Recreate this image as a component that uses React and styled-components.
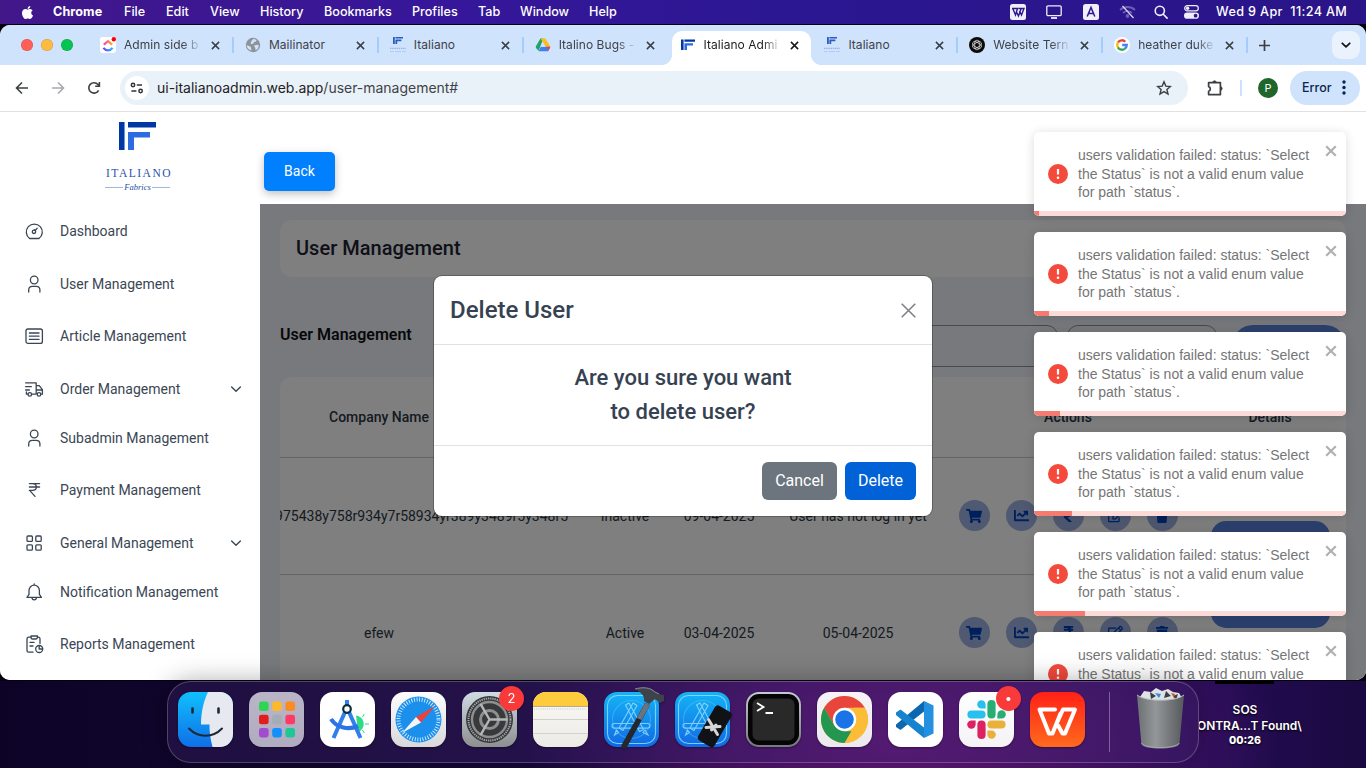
import React from "react";
import styled, { createGlobalStyle, css } from "styled-components";
import {
  FaShoppingCart,
  FaChartLine,
  FaRupeeSign,
  FaRegEdit,
  FaTrash,
  FaApple,
} from "react-icons/fa";

const Global = createGlobalStyle`
  * { box-sizing: border-box; }
  body { margin: 0; background: #0d0423; }
  svg { display: block; flex: none; }
  button { font: inherit; border: 0; padding: 0; margin: 0; background: none; }
`;

const ui = `Inter, "Liberation Sans", sans-serif`;
const roboto = `Roboto, "Liberation Sans", sans-serif`;

const Desktop = styled.div`
  position: relative;
  width: 1366px;
  height: 768px;
  overflow: hidden;
  display: flex;
  flex-direction: column;
  background: linear-gradient(90deg, #41178a 0, #36179a 450px, #2b1791 800px, #2a1488 1366px);
`;

/* ---------- menu bar ---------- */
const MenuBar = styled.header`
  height: 24px;
  flex: none;
  display: flex;
  align-items: center;
  padding: 0 18px 0 20px;
  color: #fff;
  font: 500 12.6px/24px ${ui};
`;
const MenuItem = styled.span`
  width: ${(p) => p.$w}px;
  flex: none;
  white-space: nowrap;
  font-weight: ${(p) => (p.$bold ? 700 : 500)};
  letter-spacing: ${(p) => p.$ls || 0}px;
`;
const MenuRight = styled.div`
  margin-left: auto;
  display: flex;
  align-items: center;
`;
const Tray = styled.span`
  width: ${(p) => p.$w}px;
  display: flex;
`;
const Clock = styled.span`
  width: 132px;
  white-space: pre;
  letter-spacing: 0.38px;
`;

/* ---------- browser window ---------- */
const Backing = styled.div`
  flex: none;
  height: 657px;
  padding-top: 1px;
  background: #07010f;
`;
const Window = styled.section`
  height: 655px;
  border-radius: 10px;
  overflow: hidden;
  background: #fff;
  display: flex;
  flex-direction: column;
`;
const TabStrip = styled.div`
  height: 40px;
  flex: none;
  display: flex;
  background: #d0e3fc;
`;
const Lights = styled.div`
  width: 89px;
  padding-left: 21px;
  display: flex;
  align-items: center;
  gap: 8px;
`;
const Light = styled.i`
  width: 12px;
  height: 12px;
  border-radius: 50%;
  background: ${(p) => p.$c};
  box-shadow: inset 0 0 0 0.5px rgba(0, 0, 0, 0.18);
`;
const Tabs = styled.div`
  width: 1159px;
  display: flex;
`;
const Tab = styled.div`
  flex: 1 1 0;
  min-width: 0;
  display: flex;
  align-items: center;
  border-right: 0;
`;
const TabBody = styled.div`
  position: relative;
  flex: 1;
  min-width: 0;
  height: 34px;
  margin: 6px 2px 0 3px;
  padding: 0 12px 6px 8px;
  display: flex;
  align-items: center;
  border-radius: 10px 10px 0 0;
  color: #3e4247;
  ${(p) =>
    p.$active &&
    css`
      background: #fff;
      color: #1c1d1f;
      &::before,
      &::after {
        content: "";
        position: absolute;
        bottom: 0;
        width: 10px;
        height: 10px;
      }
      &::before {
        left: -10px;
        background: radial-gradient(circle at 0 0, transparent 9.6px, #fff 10.2px);
      }
      &::after {
        right: -10px;
        background: radial-gradient(circle at 100% 0, transparent 9.6px, #fff 10.2px);
      }
    `}
`;
const TabTitle = styled.span`
  flex: 1;
  min-width: 0;
  margin: 0 7px 0 8px;
  overflow: hidden;
  white-space: nowrap;
  font: 400 12px/18px ${ui};
  letter-spacing: 0.05px;
  ${(p) =>
    p.$fade &&
    css`
      mask-image: linear-gradient(90deg, #000 58px, transparent 78px);
    `}
`;
const TabRule = styled.i`
  width: 2px;
  height: 16px;
  margin-left: -2px;
  background: ${(p) => (p.$hidden ? "transparent" : "#a5ccfb")};
`;
const NewTab = styled.div`
  width: 33px;
  display: flex;
  align-items: center;
  justify-content: center;
`;
const TabMenu = styled.button`
  width: 28px;
  height: 28px;
  margin: 6px 6px 0 auto;
  border-radius: 9px;
  background: #eaf2fe;
  display: flex;
  align-items: center;
  justify-content: center;
`;

const Toolbar = styled.div`
  height: 47px;
  flex: none;
  display: flex;
  align-items: center;
  padding: 0 6px 1px 13px;
  border-bottom: 1px solid #dfe1e4;
  background: #fff;
`;
const NavIcon = styled.span`
  width: 36px;
  display: flex;
`;
const Omnibox = styled.div`
  width: 1068px;
  height: 34px;
  margin-left: -1px;
  border-radius: 17px;
  background: #e9f1f9;
  display: flex;
  align-items: center;
  padding: 0 16px 0 5px;
  font: 400 14px/34px ${ui};
  color: #1f2124;
`;
const SiteInfo = styled.span`
  width: 24px;
  height: 24px;
  border-radius: 50%;
  background: #fff;
  display: flex;
  align-items: center;
  justify-content: center;
  margin-right: 8px;
`;
const Url = styled.span`
  flex: 1;
  letter-spacing: -0.02px;
  em {
    font-style: normal;
    color: #3f4348;
  }
`;
const Extensions = styled.span`
  width: 52px;
  padding-left: 17.5px;
`;
const ToolRule = styled.i`
  width: 2px;
  height: 16px;
  background: #cfe2fc;
  margin-right: 16px;
`;
const Profile = styled.span`
  width: 20px;
  height: 20px;
  border-radius: 50%;
  background: #20662a;
  color: #fff;
  font: 400 11px/20px ${ui};
  text-align: center;
`;
const ErrorPill = styled.span`
  margin-left: auto;
  width: 70px;
  height: 34px;
  border-radius: 17px;
  padding: 0 14px 0 12px;
  background: #d0e3fc;
  color: #0a2550;
  display: flex;
  align-items: center;
  justify-content: space-between;
  font: 500 12.5px/34px ${ui};
`;

/* ---------- site ---------- */
const Site = styled.div`
  flex: 1;
  min-height: 0;
  display: flex;
  font-family: ${roboto};
`;
const Sidebar = styled.aside`
  width: 260px;
  flex: none;
  background: #fff;
`;
const Brand = styled.div`
  height: 93px;
  padding: 10px 0 0 105px;
  color: #1f50a8;
`;
const BrandMark = styled.div`
  padding-left: 14px;
`;
const BrandName = styled.div`
  margin: 17px 0 0 1px;
  width: 70px;
  font: 400 11.5px/12px "Liberation Serif", serif;
  letter-spacing: 1.5px;
`;
const BrandSub = styled.div`
  width: 65px;
  margin-top: 2px;
  display: flex;
  align-items: center;
  gap: 1px;
  font: italic 400 8.5px/12px "Liberation Serif", serif;
  &::before,
  &::after {
    content: "";
    flex: 1;
    height: 1px;
    background: #9db8e2;
  }
`;
const NavItem = styled.a`
  height: ${(p) => (p.$group ? 54 : 52.4)}px;
  margin-bottom: ${(p) => (p.$group ? -4.6 : 0)}px;
  padding: 0 18px 0 24px;
  display: flex;
  align-items: center;
  color: #3a4654;
  font: 400 14px/20px ${roboto};
  letter-spacing: 0;
  span {
    flex: 1;
    margin-left: 16px;
    white-space: nowrap;
  }
`;
const Main = styled.main`
  flex: 1;
  min-width: 0;
  display: flex;
  flex-direction: column;
`;
const TopBar = styled.div`
  height: 92px;
  flex: none;
  padding: 40px 0 0 4px;
`;
const BackButton = styled.button`
  width: 71px;
  height: 39px;
  border-radius: 5px;
  background: #0080ff;
  color: #fff;
  font: 400 14px/39px ${roboto};
  letter-spacing: 0.1px;
  box-shadow: 0 3px 8px rgba(0, 0, 0, 0.25);
`;
const Content = styled.div`
  position: relative;
  flex: 1;
  min-height: 0;
  overflow: hidden;
  background: #f0f3f8;
  padding: 16px 20px 0;
`;
const Dim = styled.div`
  position: absolute;
  inset: 0;
  background: rgba(0, 0, 0, 0.5);
`;
const PageTitle = styled.h1`
  margin: 0;
  height: 57px;
  padding-left: 16px;
  border-radius: 12px;
  background: #fff;
  color: #1c2230;
  font: 500 20px/56px ${roboto};
  letter-spacing: 0.02px;
`;
const Filters = styled.div`
  height: 100px;
  padding-top: 48px;
  display: flex;
  align-items: flex-start;
`;
const FiltersTitle = styled.h2`
  margin: 0;
  flex: 1;
  color: #0e1116;
  font: 600 16px/20px ${roboto};
`;
const Field = styled.div`
  width: ${(p) => p.$w}px;
  height: 42px;
  margin-right: ${(p) => p.$gap}px;
  border: 1px solid #8f949b;
  border-radius: 11px;
  display: flex;
  align-items: center;
  justify-content: flex-end;
  padding: 0 13px 6px 0;
`;
const PillButton = styled.button`
  width: ${(p) => p.$w}px;
  height: ${(p) => p.$h}px;
  border-radius: 21px;
  background: #5b83dc;
`;
const Table = styled.div`
  border-radius: 12px;
  background: #fff;
  overflow: hidden;
  height: 330px;
`;
const Row = styled.div`
  display: grid;
  grid-template-columns: 198px 108px 78px 110px 168px 252px 152px;
  height: ${(p) => (p.$head ? 81 : 117)}px;
  padding-bottom: ${(p) => (p.$head ? 0 : 1)}px;
  border-bottom: 1px solid #c9cbce;
  color: #2c3644;
  font: ${(p) => (p.$head ? 500 : 400)} 14px/20px ${roboto};
  letter-spacing: 0;
`;
const Cell = styled.div`
  display: flex;
  align-items: center;
  justify-content: ${(p) => (p.$end ? "flex-end" : "center")};
  grid-column: ${(p) => (p.$end ? "span 2" : "auto")};
  padding-right: ${(p) => (p.$end ? 18 : 0)}px;
  gap: 16px;
  white-space: nowrap;
  overflow: ${(p) => (p.$end ? "hidden" : "visible")};
`;
const Stack = styled.div`
  display: flex;
  flex-direction: column;
  gap: 10px;
`;
const Action = styled.span`
  width: 31px;
  height: 31px;
  border-radius: 50%;
  background: #9fb3e2;
  color: #0040b8;
  display: flex;
  align-items: center;
  justify-content: center;
`;

/* ---------- modal ---------- */
const Modal = styled.div`
  position: absolute;
  left: 434px;
  top: 276px;
  width: 498px;
  height: 240px;
  border-radius: 8px;
  background: #fff;
  box-shadow: 0 0 0 1px rgba(0, 0, 0, 0.25);
  color: #364252;
  font-family: ${roboto};
`;
const ModalHead = styled.div`
  height: 69px;
  padding: 0 15px 0 16px;
  border-bottom: 1px solid #dee2e6;
  display: flex;
  align-items: center;
  justify-content: space-between;
  font: 500 24px/36px ${roboto};
`;
const ModalText = styled.div`
  height: 101px;
  padding-top: 16px;
  border-bottom: 1px solid #dee2e6;
  text-align: center;
  font: 500 22px/34px ${roboto};
`;
const ModalFoot = styled.div`
  padding: 16px 16px 0;
  display: flex;
  justify-content: flex-end;
  gap: 8px;
`;
const ModalButton = styled.button`
  width: ${(p) => p.$w}px;
  height: 38px;
  border-radius: 6px;
  background: ${(p) => p.$bg};
  color: #fff;
  font: 400 16px/38px ${roboto};
`;

/* ---------- toasts ---------- */
const Toasts = styled.div`
  position: absolute;
  left: 1014px;
  top: 112px;
  width: 352px;
  height: 568px;
  padding: 20px 20px 0;
  overflow: hidden;
  border-radius: 0 0 10px 0;
  display: flex;
  flex-direction: column;
  gap: 16px;
`;
const Toast = styled.div`
  height: 84px;
  flex: none;
  border-radius: 5px;
  overflow: hidden;
  background: #fff;
  box-shadow: 0 1px 10px rgba(0, 0, 0, 0.1), 0 2px 15px rgba(0, 0, 0, 0.05);
  display: flex;
  flex-direction: column;
`;
const ToastBody = styled.div`
  height: 79px;
  padding: 5px 9px 0 14px;
  display: flex;
  align-items: center;
  color: #757575;
`;
const ToastText = styled.p`
  margin: 0 0 0 10px;
  width: 240px;
  white-space: pre-line;
  font: 400 14px/18.5px "Liberation Sans", Arial, sans-serif;
`;
const ToastClose = styled.span`
  align-self: flex-start;
  margin: 7.5px 0 0 6.5px;
`;
const Progress = styled.div`
  height: 5px;
  background: #fcdad7;
`;
const ProgressFill = styled.div`
  height: 5px;
  background: #f77a70;
`;

/* ---------- dock ---------- */
const Shelf = styled.footer`
  position: relative;
  flex: 1;
  display: flex;
  padding-left: 167px;
  background:
    radial-gradient(ellipse 380px 170px at 900px 60px, rgba(110, 24, 132, 0.95) 0, rgba(96, 22, 122, 0.75) 45%, transparent 100%),
    linear-gradient(90deg, #0d0327 0, #12062f 300px, #190a45 700px, #2a0f62 1100px, #1a0940 1366px);
`;
const Dock = styled.div`
  width: 1032px;
  height: 82px;
  border-radius: 24px;
  border: 1px solid rgba(255, 255, 255, 0.22);
  background: rgba(56, 32, 96, 0.42);
  box-shadow: 0 0 26px rgba(0, 0, 0, 0.32);
  display: flex;
  align-items: flex-start;
  padding: 10px 0 0 10px;
`;
const DockApp = styled.div`
  position: relative;
  width: 55px;
  height: 55px;
  margin-right: 16px;
  flex: none;
  filter: drop-shadow(0 1px 1px rgba(0, 0, 0, 0.35));
`;
const Badge = styled.span`
  position: absolute;
  right: -7px;
  top: -6px;
  width: 25px;
  height: 25px;
  border-radius: 50%;
  background: #f83a3a;
  color: #fff;
  font: 400 13px/25px ${ui};
  text-align: center;
`;
const DockRule = styled.i`
  width: 1px;
  height: 60px;
  margin: 0 23px 0 8px;
  background: rgba(255, 255, 255, 0.32);
`;
const FileLabel = styled.div`
  width: 110px;
  overflow: hidden;
  color: #fff;
  font: 600 12px/16px ${ui};
  text-align: center;
  padding-right: 18px;
  text-shadow: 0 1px 2px #000;
  small {
    display: block;
    font-size: 10.5px;
    line-height: 14px;
    font-weight: 800;
  }
  p {
    margin: 0 -20px 0 -2px;
    text-align: left;
    white-space: nowrap;
    letter-spacing: -0.05px;
  }
`;
const FileThumb = styled.i`
  display: block;
  width: 59px;
  height: 3px;
  margin: 0 0 18px 16px;
  background: #000;
`;

/* ---------- drawings ---------- */
const Cross = ({ s = 9, w = 1.7, c = "#3b3f44" }) => (
  <svg width={s} height={s} viewBox="0 0 10 10" stroke={c} strokeWidth={w} fill="none">
    <path d="M1 1l8 8M9 1l-8 8" />
  </svg>
);
const Chevron = ({ s = 12, w = 1.4, c = "#3a4654" }) => (
  <svg width={s} height={s} viewBox="0 0 12 12" stroke={c} strokeWidth={w} fill="none" strokeLinecap="round" strokeLinejoin="round">
    <path d="M1.6 4l4.4 4.2L10.4 4" />
  </svg>
);

const Mark = ({ width, height }) => (
  <svg width={width} height={height} viewBox="0 0 37 28">
    <path fill="#0037a3" d="M0 0h5v28H0zM9 0h28v5.5H9z" />
    <path fill="#2c6ce0" d="M9 10h22v5.5H15V28H9z" />
    <path fill="#6b97ea" d="M5 0h1v28H5z" />
  </svg>
);
const BrandFav = () => (
  <svg width="16" height="16" viewBox="0 0 16 16">
    <path fill="#2a5bc0" d="M3 0h1.8v7H3zM5.4 0H13v1.5H5.4zM5.4 2.6h6v1.6H7.2V7H5.4z" />
    <path stroke="#8fb0e8" d="M0 11.4h16" strokeDasharray="1.4 .8" strokeWidth="1.4" />
    <path stroke="#a9c4f0" d="M0 14.6h4M12 14.6h4M5 14.6h6" strokeWidth=".8" />
  </svg>
);

const favicons = {
  clickup: (
    <svg width="16" height="16" viewBox="0 0 16 16">
      <defs>
        <linearGradient id="cu1"><stop offset="0" stopColor="#ff3fb4" /><stop offset="1" stopColor="#ffab1a" /></linearGradient>
        <linearGradient id="cu2"><stop offset="0" stopColor="#7a3cff" /><stop offset="1" stopColor="#22b8ff" /></linearGradient>
      </defs>
      <rect width="16" height="16" rx="3" fill="#fff" />
      <path d="M3.8 7.6L8 4.2l4.2 3.4" stroke="url(#cu1)" strokeWidth="2.2" fill="none" />
      <path d="M3.4 10.8c2.6 3.4 6.6 3.4 9.2 0" stroke="url(#cu2)" strokeWidth="2.2" fill="none" />
      <circle cx="13.8" cy="2.2" r="2.2" fill="#f00" />
    </svg>
  ),
  globe: (
    <svg width="16" height="16" viewBox="0 0 16 16">
      <circle cx="8" cy="8" r="7.2" fill="#8d9399" />
      <path fill="#d0e3fc" d="M1.8 8.2l3.6 1.2.8 2 .2 2.4-2-1.2C2.4 11.4 1.800 9.800 1.800 8.200zM8.600 1.800l3 1.200-.6 1.600-2 .4-.6 1.600-2 .6-.8-1.200 1-2.200zM9 8.400l3.400-.6 1.600 1-1.400 3.200-2 1.200-.4-2.400z" />
    </svg>
  ),
  brand: <BrandFav />,
  mark: (
    <svg width="16" height="12" viewBox="0 0 16 12">
      <path fill="#0037a3" d="M1 .500h2.600v10.500H1zM4.400.500H15v2.200H4.400z" />
      <path fill="#2c6ce0" d="M4.400 4.200h8.600v2.200H7V11H4.400z" />
    </svg>
  ),
  drive: (
    <svg width="16" height="16" viewBox="0 0 16 16">
      <path fill="#1fa463" d="M5.400 1.400h3L3.600 13.800 1 11 .8 9.400z" />
      <path fill="#fcbc1f" d="M5.600 1.400h4.800l5 8.400h-4.800z" />
      <path fill="#3f7ff0" d="M3.600 14.200L5.800 9.800h9.600l-2.200 4.400z" />
      <path fill="#ea4335" d="M11.200 9.800h4.200l-1.800 3.600z" />
      <path fill="#d0e3fc" d="M8 5.600l2.400 4.200H5.800z" />
    </svg>
  ),
  gpt: (
    <svg width="16" height="16" viewBox="0 0 16 16">
      <circle cx="8" cy="8" r="8" fill="#0a0a0a" />
      <g stroke="#e8e8e8" strokeWidth=".7" fill="none">
        {[0, 60, 120].map((a) => (
          <rect key={a} x="5.700" y="3.200" width="4.600" height="9.600" rx="2.300" transform={`rotate(${a} 8 8)`} />
        ))}
      </g>
    </svg>
  ),
  google: (
    <svg width="16" height="16" viewBox="0 0 16 16">
      <circle cx="8" cy="8" r="8" fill="#fff" />
      <g fill="none" strokeWidth="2.300">
        <path stroke="#ea4335" d="M4 5.400A4.700 4.700 0 0 1 11.300 4.700" />
        <path stroke="#fbbc05" d="M4 5.300a5 5 0 0 0 0 5.200" />
        <path stroke="#34a853" d="M3.900 10.400a4.700 4.700 0 0 0 7.100 1.200" />
        <path stroke="#4285f4" d="M8.200 8h4.600a4.900 4.900 0 0 1-1.900 3.700" />
      </g>
    </svg>
  ),
};

const tabs = [
  { icon: "clickup", title: "Admin side b", fade: true },
  { icon: "globe", title: "Mailinator" },
  { icon: "brand", title: "Italiano" },
  { icon: "drive", title: "Italino Bugs -", fade: true, noRule: true },
  { icon: "mark", title: "Italiano Admi", fade: true, active: true, noRule: true },
  { icon: "brand", title: "Italiano" },
  { icon: "gpt", title: "Website Tern", fade: true },
  { icon: "google", title: "heather duke", fade: true },
];

const Line = ({ children }) => (
  <svg width="20" height="20" viewBox="0 0 20 20" fill="none" stroke="#3a4654" strokeWidth="1.3" strokeLinecap="round" strokeLinejoin="round">
    {children}
  </svg>
);
const PersonIcon = (
  <Line>
    <circle cx="10.2" cy="6" r="3.8" />
    <path d="M4.700 18v-2.200a3.600 3.600 0 0 1 3.600-3.400h4a3.600 3.600 0 0 1 3.600 3.400V18" />
  </Line>
);
const nav = [
  { label: "Dashboard", icon: (
    <Line>
      <path d="M5.600 17.500h9.400A8 8 0 1 0 5.600 17.500z" />
      <circle cx="10" cy="10.800" r="1.700" /><path d="M11.200 9.600l2-2.400M10.600 8.600h.1" />
    </Line>) },
  { label: "User Management", icon: PersonIcon },
  { label: "Article Management", icon: (
    <Line><rect x="2" y="3" width="16.400" height="14.400" rx="2" /><path d="M5.400 7h9.600M5.400 10.200h9.600M5.400 13.400h9.600" /></Line>) },
  { label: "Order Management", group: true, icon: (
    <Line>
      <path d="M1.600 3.800h10.600v11.400H8M1.600 7.600h5.800M1.600 11h3.800M2.400 13v2.200h1.400M12.200 6.600h3l3.200 4v4.600h-1.200M12.200 11h6" />
      <circle cx="5.800" cy="15.400" r="1.800" /><circle cx="15" cy="15.400" r="1.800" />
    </Line>) },
  { label: "Subadmin Management", icon: PersonIcon },
  { label: "Payment Management", icon: (
    <Line><path d="M5.400 3.600h10.200M5.400 7h10.200M5.400 10.400h3.200c5 0 5-6.800 0-6.800M5.600 10.400l5.400 6" /></Line>) },
  { label: "General Management", group: true, icon: (
    <Line>
      <rect x="3" y="3" width="5.400" height="5.400" rx="1" /><rect x="11.800" y="3" width="5.400" height="5.400" rx="1" />
      <rect x="3" y="11.800" width="5.400" height="5.400" rx="1" /><rect x="11.800" y="11.800" width="5.400" height="5.400" rx="1" />
    </Line>) },
  { label: "Notification Management", icon: (
    <Line><path d="M3 15.400h14.400l-2-3V8.400a5.200 5.200 0 0 0-10.400 0v4zM8 15.600a2.200 2.200 0 0 0 4.400 0M10.200 3V1.800" /></Line>) },
  { label: "Reports Management", icon: (
    <Line>
      <path d="M7 3.200H4.600A1.600 1.600 0 0 0 3 4.800V16.600a1.600 1.600 0 0 0 1.600 1.600H9M13.400 3.200h1.200A1.600 1.600 0 0 1 16 4.800v4.600" />
      <path d="M7 2h6.400v1.400a1.600 1.600 0 0 1-1.600 1.600H8.600A1.600 1.600 0 0 1 7 3.400zM6 8.400h4M6 12h3" />
      <circle cx="15.200" cy="15" r="3.500" /><path d="M15.200 11.600V15h3.400" />
    </Line>) },
];

const Hub = ({ id, from, to, children }) => (
  <svg width="55" height="55" viewBox="0 0 55 55" overflow="visible">
    <defs><linearGradient id={id} x2="0" y2="1"><stop stopColor={from} /><stop offset="1" stopColor={to} /></linearGradient></defs>
    <rect width="55" height="55" rx="13" fill={`url(#${id})`} />
    {children}
  </svg>
);
const Blueprint = () => (
  <g fill="none" stroke="#8fdcff" strokeWidth="1.100" opacity=".85">
    <rect x="3.500" y="3.500" width="48" height="48" rx="10" />
    <circle cx="27.500" cy="27.500" r="19" opacity=".35" />
    <rect x="8" y="31.500" width="38" height="4.600" rx="2.300" />
    <path d="M29 11l-14 25 4 2.500 14-25zM25 11l14.500 26.500-4 2L21.500 13z" strokeLinejoin="round" />
    <path d="M12.500 38l-2 5 4-2.600zM41 38l3 5-5-2.500z" />
  </g>
);
const launchColors = ["#2fd552", "#fdb92c", "#fb8b23", "#e11d1d", "#a3adb5", "#ff3a63", "#a24bd0", "#1590fb", "#1fc795"];

const dockApps = [
  <Hub id="fi" from="#10c0fd" to="#0f6fe8">
    <path d="M30 0h12a13 13 0 0 1 13 13v29a13 13 0 0 1-13 13h-7.500c-2-8-3.200-15-3-22.500H23C23 20 26 8 30 0z" fill="#e6eaf0" />
    <path d="M14.500 16.500v4M40.500 16.500v4" stroke="#1d2833" strokeWidth="2.600" strokeLinecap="round" />
    <path d="M11 36.500c9 9.500 24 9.500 33 0" stroke="#1d2833" strokeWidth="2" fill="none" strokeLinecap="round" />
  </Hub>,
  <Hub id="lp" from="#bab5c6" to="#b1abc1">
    {launchColors.map((c, i) => (
      <rect key={c} x={10 + (i % 3) * 13.2} y={9.5 + Math.floor(i / 3) * 13.2} width="9.600" height="9.600" rx="2.400" fill={c} />
    ))}
  </Hub>,
  <Hub id="as" from="#fff" to="#fff">
    <path d="M36 23.500a8.500 8.500 0 0 1 2 16.500z" fill="#2fdc84" />
    <path d="M42.500 25l1.800-3M45 32h4M42.500 38l1.800 3" stroke="#2fdc84" strokeWidth="1" />
    <path d="M25 20L13.500 46M29 20l11.500 26M27 8v7" stroke="#2f7fee" strokeWidth="4" fill="none" />
    <path d="M11 27c6 9.500 18 11 27 7" stroke="#2a74e4" strokeWidth="4.200" fill="none" />
    <circle cx="27" cy="17" r="3.800" fill="#fff" stroke="#073042" strokeWidth="2.200" />
  </Hub>,
  <Hub id="sf" from="#fdfdfd" to="#d9d9dc">
    <circle cx="27.500" cy="27.500" r="23" fill="#1b8fec" />
    <circle cx="27.500" cy="27.500" r="20" fill="none" stroke="#d8eeff" strokeWidth="4" strokeDasharray=".9 1.720" />
    <path d="M44 14L30 30.500 25 25z" fill="#f0403a" />
    <path d="M11 41l14-16 5 5.500z" fill="#f2f4f6" />
  </Hub>,
  <>
    <Hub id="st" from="#cfdbe3" to="#8d8f90">
      <circle cx="27.500" cy="27.500" r="23.500" fill="#37393b" />
      <circle cx="27.500" cy="27.500" r="21" fill="none" stroke="#a5a7a9" strokeWidth="2" strokeDasharray="1.300 .9" />
      <circle cx="27.500" cy="27.500" r="17.500" fill="none" stroke="#8c8e90" strokeWidth="2.400" />
      <circle cx="27.500" cy="27.500" r="9" fill="none" stroke="#8c8e90" strokeWidth="3" />
      <path d="M27.500 27.500h18M27.500 27.500l-9-15.600M27.500 27.500l-9 15.600" stroke="#b4b6b8" strokeWidth="2.400" />
    </Hub>
    <Badge>2</Badge>
  </>,
  <Hub id="nt" from="#fbfaf8" to="#eceae5">
    <path d="M0 14V13A13 13 0 0 1 13 0h29a13 13 0 0 1 13 13v1z" fill="#fdcb3c" />
    <path d="M0 14.500h55" stroke="#b9a98a" />
    <path d="M1 17h53" stroke="#c9c6c0" strokeDasharray="1 1.200" />
    <path d="M0 27.500h55M0 41.500h55" stroke="#d3d0ca" />
  </Hub>,
  <Hub id="xc" from="#14b4f6" to="#1169e4">
    <Blueprint />
    <path d="M41 11l5 2-23.500 43c-2 2-6 0-5-3z" fill="#24272d" />
    <path d="M41 11l5 2-8.500 15-4.600-2z" fill="#6d737c" />
    <path d="M31-3c7-2 15-2 20 3l4 2 5 1v6l-4 2-5-4-6 5-5-3c1-6-4-9-9-12z" fill="#3e434b" />
    <path d="M31-3c7-2 15-2 20 3l4 2" stroke="#8a9099" fill="none" />
  </Hub>,
  <Hub id="sm" from="#14b4f6" to="#1169e4">
    <Blueprint />
    <g transform="rotate(30 40 35)">
      <rect x="30" y="14.500" width="19" height="40" rx="3.500" fill="#111215" />
    </g>
    <path d="M33.500 27.500l9 15M41 33l-4.500 5M31 35.500l14-1" stroke="#d5d6d8" strokeWidth="3" strokeLinecap="round" />
  </Hub>,
  <Hub id="tm" from="#c2ccd4" to="#77797c">
    <rect x="2" y="2" width="51" height="51" rx="11" fill="#050505" />
    <rect x="6.500" y="6.500" width="42" height="42" rx="6" fill="#29292a" />
    <path d="M11 11l6.500 4L11 19M19.500 21h7.500" stroke="#fff" strokeWidth="1.800" fill="none" />
  </Hub>,
  <Hub id="ch" from="#f6f4f8" to="#ebe8ee">
    <circle cx="27.500" cy="27.500" r="23.500" fill="#fbbd38" />
    <path d="M7.150 15.750A23.500 23.500 0 0 1 47.850 15.750H27.500L17.300 33.400z" fill="#e8453c" />
    <path d="M7.150 15.750L17.300 33.400 27.500 39.200h10.200L27.500 51A23.500 23.500 0 0 1 7.150 15.750z" fill="#23964f" />
    <path d="M47.850 15.750A23.500 23.500 0 0 1 27.500 51l10.200-17.600L37 15.750z" fill="#fbbd38" />
    <circle cx="27.500" cy="27.500" r="11.700" fill="#fff" />
    <circle cx="27.500" cy="27.500" r="9.300" fill="#1b73e8" />
  </Hub>,
  <Hub id="vs" from="#fff" to="#fff">
    <path d="M36 9l9.500 4.500v28L36 46z" fill="#2490e0" />
    <path d="M36 9v10.500L12.500 38 8 35v-2.500z" fill="#0a67b0" />
    <path d="M36 46V35.500L12.500 17.500 8 20.500v2.400z" fill="#1583cd" />
  </Hub>,
  <>
    <Hub id="sl" from="#fff" to="#f4f2f5">
      <g strokeWidth="8.200" strokeLinecap="round" fill="none">
        <path d="M12.500 22.500h10" stroke="#29c0ee" /><path d="M32.500 12v10.500" stroke="#27ae75" />
        <path d="M42.500 32.500h-10" stroke="#e9b13c" /><path d="M22.500 43V32.500" stroke="#de2160" />
      </g>
      <path d="M26.600 16.600h-4.200a4.200 4.200 0 1 1 4.200-4.200z" fill="#29c0ee" />
      <path d="M38.400 26.600v-4.200a4.200 4.200 0 1 1 4.200 4.200z" fill="#27ae75" />
      <path d="M28.400 38.400h4.200a4.200 4.200 0 1 1-4.200 4.200z" fill="#e9b13c" />
      <path d="M16.600 28.400v4.200a4.200 4.200 0 1 1-4.200-4.200z" fill="#de2160" />
    </Hub>
    <Badge>•</Badge>
  </>,
  <Hub id="wp" from="#ff2116" to="#ff6a1e">
    <path d="M25 17.500H9.500L19 41.500h3.500L30.500 21.500M27 31.500l5.500 10H35L45 17.500H33L26 33" stroke="#fff" strokeWidth="4" fill="none" strokeLinejoin="round" strokeLinecap="round" />
  </Hub>,
];

const TrashSvg = styled.svg`
  margin-top: -4px;
`;
const Trash = () => (
  <TrashSvg width="55" height="62" viewBox="0 0 55 62">
    <defs><linearGradient id="tr"><stop stopColor="#6c7073" /><stop offset=".4" stopColor="#93979a" /><stop offset="1" stopColor="#55595c" /></linearGradient></defs>
    <path d="M7 9l4-6 7 1 5-4 6 3 6-2 5 3 6 1 3 5-4 7H12z" fill="#dfe2e4" />
    <path d="M17 4l6 4-5 3zM33 3l5 5-7 2zM40 8l5-2-2 6z" fill="#3b3f43" />
    <path d="M22 5l6 1-2 4z" fill="#2f8fd8" /><path d="M38 5l4 1-1 4z" fill="#c9552f" />
    <path d="M4 7c8 7 39 7 47 0l-4.600 49c-1 6-37 6-38 0z" fill="url(#tr)" />
    <path d="M4 7c8 7 39 7 47 0" stroke="#b5b9bc" fill="none" />
    <path d="M8.600 55c2 6 35 6 37.600 0" stroke="#a6aaad" fill="none" />
  </TrashSvg>
);

const message = "users validation failed: status: `Select\nthe Status` is not a valid enum value\nfor path `status`.";
const progress = [5, 15, 26, 38, 51, 64];

const ActionSet = () => (
  <>
    <Action><FaShoppingCart size={16} /></Action>
    <Action><FaChartLine size={15} /></Action>
    <Action><FaRupeeSign size={15} /></Action>
    <Action><FaRegEdit size={15} /></Action>
    <Action><FaTrash size={14} /></Action>
  </>
);
const rows = [
  { name: "975438y758r934y7r58934yr389y3489r5y348r5", long: true, status: "Inactive", created: "09-04-2025", login: "User has not log in yet" },
  { name: "efew", status: "Active", created: "03-04-2025", login: "05-04-2025" },
];

export default function App() {
  return (
    <Desktop>
      <Global />
      <MenuBar>
        <MenuItem $w={33}><FaApple size={15} /></MenuItem>
        <MenuItem $w={71} $bold $ls={0.1}>Chrome</MenuItem>
        <MenuItem $w={42}>File</MenuItem>
        <MenuItem $w={44}>Edit</MenuItem>
        <MenuItem $w={50}>View</MenuItem>
        <MenuItem $w={64}>History</MenuItem>
        <MenuItem $w={88}>Bookmarks</MenuItem>
        <MenuItem $w={66}>Profiles</MenuItem>
        <MenuItem $w={42}>Tab</MenuItem>
        <MenuItem $w={69}>Window</MenuItem>
        <MenuItem $w={40}>Help</MenuItem>
        <MenuRight>
          <Tray $w={36}>
            <svg width="16" height="16" viewBox="0 0 16 16"><rect width="16" height="16" rx="2.500" fill="#f0eef8" /><path d="M2 4.500h5.500L5.500 11 3 5M6.500 8l2 4L11 5M8.500 4.500H14L11.500 11 9.500 7" stroke="#2d178f" strokeWidth="1.400" fill="none" /></svg>
          </Tray>
          <Tray $w={37}>
            <svg width="16" height="14" viewBox="0 0 16 14" fill="none" stroke="#f0eef8" strokeWidth="1.300"><rect x=".8" y=".8" width="14.400" height="9.800" rx="1.200" /><path d="M5 13h6" strokeWidth="1.800" /></svg>
          </Tray>
          <Tray $w={36}>
            <svg width="16" height="16" viewBox="0 0 16 16"><rect width="16" height="16" rx="2.500" fill="#f0eef8" /><path d="M4.200 12.500L8 3.500l3.800 9M5.400 9.500h5.200" stroke="#2d178f" strokeWidth="1.500" fill="none" /></svg>
          </Tray>
          <Tray $w={35}>
            <svg width="17" height="14" viewBox="0 0 17 14" fill="none" stroke="#6f5db4" strokeWidth="1.800"><path d="M1 5c4-4 11-4 15 0M4 8c2.600-2.400 6.400-2.400 9 0" /><circle cx="8.500" cy="11" r="1" /><path d="M3.500 1l11 12" stroke="#d9d4ee" strokeWidth="1.300" /></svg>
          </Tray>
          <Tray $w={30}>
            <svg width="14" height="14" viewBox="0 0 14 14" fill="none" stroke="#f0eef8" strokeWidth="1.600" strokeLinecap="round"><circle cx="5.800" cy="5.800" r="4.600" /><path d="M9.300 9.300l3.800 3.800" /></svg>
          </Tray>
          <Tray $w={32}>
            <svg width="15" height="14" viewBox="0 0 15 14"><rect x=".7" y=".7" width="13.600" height="5.200" rx="2.600" fill="none" stroke="#f0eef8" strokeWidth="1.200" /><circle cx="3.600" cy="3.300" r="1.700" fill="#f0eef8" /><rect y="7.600" width="15" height="6.200" rx="3.100" fill="#f0eef8" /><circle cx="11.600" cy="10.700" r="1.900" fill="#2d178f" /></svg>
          </Tray>
          <Clock>Wed 9 Apr  11:24 AM</Clock>
        </MenuRight>
      </MenuBar>

      <Backing>
        <Window>
          <TabStrip>
            <Lights><Light $c="#ff5f57" /><Light $c="#febb40" /><Light $c="#06c450" /></Lights>
            <Tabs>
              {tabs.map((t, i) => (
                <Tab key={i}>
                  <TabBody $active={t.active}>
                    {favicons[t.icon]}
                    <TabTitle $fade={t.fade}>{t.title}</TabTitle>
                    <Cross c={t.active ? "#17181a" : undefined} />
                  </TabBody>
                  <TabRule $hidden={t.noRule} />
                </Tab>
              ))}
            </Tabs>
            <NewTab>
              <svg width="11" height="11" viewBox="0 0 11 11" stroke="#3b3f44" strokeWidth="1.700"><path d="M5.500 0v11M0 5.500h11" /></svg>
            </NewTab>
            <TabMenu><Chevron s={10} w={2.2} c="#17181a" /></TabMenu>
          </TabStrip>
          <Toolbar>
            <NavIcon><svg width="18" height="18" viewBox="0 0 18 18" stroke="#3c4043" strokeWidth="1.600" fill="none"><path d="M15 9H4M9 3.500L3.500 9 9 14.500" /></svg></NavIcon>
            <NavIcon><svg width="18" height="18" viewBox="0 0 18 18" stroke="#a6a9ad" strokeWidth="1.600" fill="none"><path d="M3 9h11M9 3.500L14.500 9 9 14.500" /></svg></NavIcon>
            <NavIcon><svg width="18" height="18" viewBox="0 0 18 18" stroke="#3c4043" strokeWidth="1.600" fill="none"><path d="M13.600 11.400A5.200 5.200 0 1 1 13 5.600l1 1.200M14.400 3v4.200h-4.200" /></svg></NavIcon>
            <Omnibox>
              <SiteInfo>
                <svg width="14" height="12" viewBox="0 0 14 12" fill="none" stroke="#2f3236" strokeWidth="1.500"><circle cx="3" cy="3" r="1.700" /><path d="M6.800 3H12M1.400 9h5" /><circle cx="10.600" cy="9" r="1.700" /></svg>
              </SiteInfo>
              <Url>ui-italianoadmin.web.app<em>/user-management#</em></Url>
              <svg width="16" height="16" viewBox="0 0 16 16" fill="none" stroke="#3c4043" strokeWidth="1.400"><path d="M8 1.800l1.800 4.300 4.600.4-3.500 3 1.100 4.500L8 11.600 4 14l1.100-4.500-3.500-3 4.600-.4z" /></svg>
            </Omnibox>
            <Extensions>
              <svg width="19" height="18" viewBox="0 0 19 18" fill="none" stroke="#3c4043" strokeWidth="1.700" strokeLinejoin="round"><path d="M2.600 3.600h11.800v12H2.600v-3.400a2.400 2.400 0 0 0 0-4.600z" /><path d="M6.800 3a1.800 1.800 0 0 1 3.400 0zM15 7.800a1.800 1.800 0 0 1 0 3.400z" fill="#3c4043" strokeWidth=".8" /></svg>
            </Extensions>
            <ToolRule />
            <Profile>P</Profile>
            <ErrorPill>
              Error
              <svg width="4" height="15" viewBox="0 0 4 15" fill="#0a2550"><circle cx="2" cy="2" r="1.700" /><circle cx="2" cy="7.500" r="1.700" /><circle cx="2" cy="13" r="1.700" /></svg>
            </ErrorPill>
          </Toolbar>

          <Site>
            <Sidebar>
              <Brand>
                <BrandMark><Mark width={37} height={28} /></BrandMark>
                <BrandName>ITALIANO</BrandName>
                <BrandSub>Fabrics</BrandSub>
              </Brand>
              {nav.map((n) => (
                <NavItem key={n.label} $group={n.group}>
                  {n.icon}
                  <span>{n.label}</span>
                  {n.group && <Chevron />}
                </NavItem>
              ))}
            </Sidebar>
            <Main>
              <TopBar><BackButton>Back</BackButton></TopBar>
              <Content>
                <PageTitle>User Management</PageTitle>
                <Filters>
                  <FiltersTitle>User Management</FiltersTitle>
                  <Field $w={220} $gap={9}><Chevron s={11} /></Field>
                  <Field $w={150} $gap={15} />
                  <PillButton $w={114} $h={42} />
                </Filters>
                <Table>
                  <Row $head>
                    <Cell>Company Name</Cell><Cell /><Cell /><Cell /><Cell />
                    <Cell>Actions</Cell><Cell>Details</Cell>
                  </Row>
                  {rows.map((r) => (
                    <Row key={r.name}>
                      <Cell $end={r.long}>{r.name}</Cell>
                      {!r.long && <Cell />}
                      <Cell>{r.status}</Cell>
                      <Cell>{r.created}</Cell>
                      <Cell>{r.login}</Cell>
                      <Cell><ActionSet /></Cell>
                      <Cell><Stack><PillButton $w={119} $h={30} /><PillButton $w={119} $h={30} /></Stack></Cell>
                    </Row>
                  ))}
                </Table>
                <Dim />
              </Content>
            </Main>
          </Site>
        </Window>
      </Backing>

      <Modal>
        <ModalHead>Delete User<Cross s={17} w={0.9} c="#7c7f83" /></ModalHead>
        <ModalText>Are you sure you want<br />to delete user?</ModalText>
        <ModalFoot>
          <ModalButton $w={75} $bg="#6c757d">Cancel</ModalButton>
          <ModalButton $w={71} $bg="#0062d6">Delete</ModalButton>
        </ModalFoot>
      </Modal>

      <Toasts>
        {progress.map((w) => (
          <Toast key={w}>
            <ToastBody>
              <svg width="20" height="20" viewBox="0 0 20 20"><circle cx="10" cy="10" r="10" fill="#f44a3c" /><path d="M10 5v5.600" stroke="#fff" strokeWidth="2.200" /><circle cx="10" cy="13.800" r="1.300" fill="#fff" /></svg>
              <ToastText>{message}</ToastText>
              <ToastClose><Cross s={12} w={1.8} c="#b0b0b0" /></ToastClose>
            </ToastBody>
            <Progress><ProgressFill style={{ width: w }} /></Progress>
          </Toast>
        ))}
      </Toasts>

      <Shelf>
        <Dock>
          {dockApps.map((a, i) => <DockApp key={i}>{a}</DockApp>)}
          <DockRule />
          <Trash />
        </Dock>
        <FileLabel><FileThumb />SOS<p>ONTRA...T Found\</p><small>00:26</small></FileLabel>
      </Shelf>
    </Desktop>
  );
}
